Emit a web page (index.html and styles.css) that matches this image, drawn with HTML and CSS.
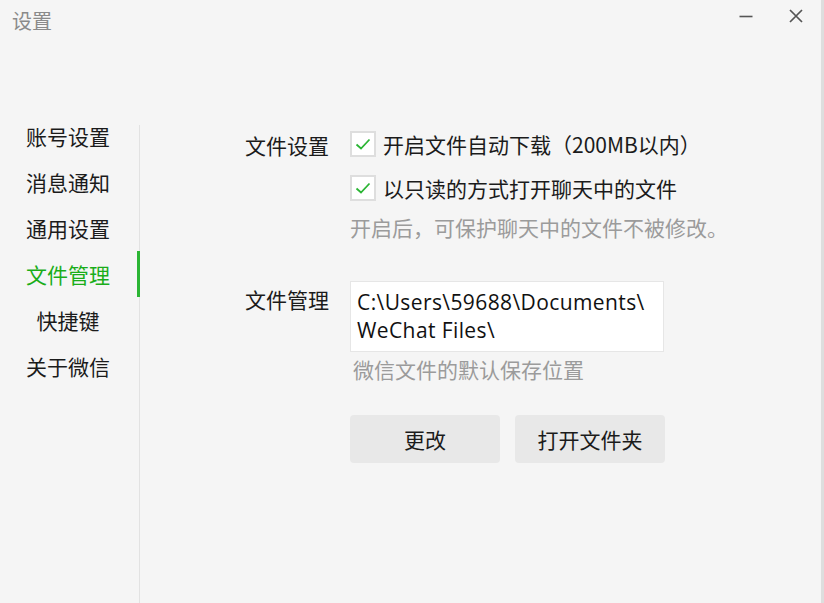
FILE: index.html
```html
<!DOCTYPE html>
<html lang="zh-CN">
<head>
<meta charset="utf-8">
<title>设置</title>
<link rel="stylesheet" href="styles.css">
</head>
<body>
<div class="window">
  <header class="titlebar">
    <span class="title">设置</span>
    <div class="controls">
      <span class="ctl">
        <svg width="14" height="14" viewBox="0 0 14 14"><path d="M0.5 7.5H13.5" stroke="#555" stroke-width="1.6"/></svg>
      </span>
      <span class="ctl">
        <svg width="14" height="14" viewBox="0 0 14 14"><path d="M1 1L13 13M13 1L1 13" stroke="#555" stroke-width="1.7"/></svg>
      </span>
    </div>
  </header>
  <div class="main">
    <nav class="sidebar">
      <div class="nav-item">账号设置</div>
      <div class="nav-item">消息通知</div>
      <div class="nav-item">通用设置</div>
      <div class="nav-item active">文件管理</div>
      <div class="nav-item">快捷键</div>
      <div class="nav-item">关于微信</div>
    </nav>
    <section class="content">
      <div class="row first">
        <div class="label">文件设置</div>
        <div class="field">
          <label class="check">
            <span class="box"><svg width="20" height="20" viewBox="0 0 20 20"><path d="M3.5 10.5L8 14.5L16.5 5.5" fill="none" stroke="#2bb534" stroke-width="1.8"/></svg></span>
            <span>开启文件自动下载（200MB以内）</span>
          </label>
          <label class="check second">
            <span class="box"><svg width="20" height="20" viewBox="0 0 20 20"><path d="M3.5 10.5L8 14.5L16.5 5.5" fill="none" stroke="#2bb534" stroke-width="1.8"/></svg></span>
            <span>以只读的方式打开聊天中的文件</span>
          </label>
          <div class="hint">开启后，可保护聊天中的文件不被修改。</div>
        </div>
      </div>
      <div class="row second-row">
        <div class="label label-path">文件管理</div>
        <div class="field">
          <div class="path">C:\Users\59688\Documents\<br>WeChat Files\</div>
          <div class="hint hint2">微信文件的默认保存位置</div>
          <div class="buttons">
            <button class="btn">更改</button>
            <button class="btn">打开文件夹</button>
          </div>
        </div>
      </div>
    </section>
  </div>
</div>
</body>
</html>
```

FILE: styles.css
```css
* { box-sizing: border-box; }
html, body {
  margin: 0;
  padding: 0;
  background: #f5f5f5;
}
body {
  font-family: "Noto Sans CJK SC", "Noto Sans", sans-serif;
  color: #1b1b1b;
}
.window {
  width: 824px;
  height: 603px;
  display: flex;
  flex-direction: column;
  background: #f5f5f5;
  border-right: 3px solid #dedede;
  overflow: hidden;
}
.titlebar {
  height: 44px;
  display: flex;
  justify-content: space-between;
  align-items: flex-start;
  padding: 6px 0 0 12px;
  flex: none;
}
.title {
  font-size: 20px;
  line-height: 30px;
  color: #8a8a8a;
}
.controls {
  display: flex;
  gap: 36px;
  padding: 3px 18px 0 0;
}
.ctl { display: block; width: 14px; height: 14px; }
.ctl svg { display: block; }
.main {
  flex: 1;
  display: flex;
}
.sidebar {
  width: 140px;
  flex: none;
  padding-top: 69px;
  position: relative;
}
.sidebar::after {
  content: "";
  position: absolute;
  right: 0;
  top: 81px;
  bottom: 0;
  width: 1px;
  background: #e2e2e2;
}
.nav-item {
  height: 46px;
  line-height: 46px;
  font-size: 21px;
  text-align: center;
  padding-right: 4px;
  position: relative;
}
.nav-item.active { color: #1aad19; }
.nav-item.active::after {
  content: "";
  position: absolute;
  right: 0;
  top: 0;
  width: 3px;
  height: 46px;
  background: #2bb534;
  z-index: 1;
}
.content {
  flex: 1;
  padding: 87px 0 0 105px;
  font-size: 21px;
}
.row {
  display: grid;
  grid-template-columns: 105px auto;
}
.label {
  line-height: 26px;
  margin-top: 1px;
}
.label-path { margin-top: 5px; }
.check {
  display: flex;
  align-items: center;
  gap: 7px;
  height: 26px;
  line-height: 26px;
}
.check.second { margin-top: 18px; }
.box {
  width: 26px;
  height: 26px;
  border: 2px solid #dedede;
  background: #fff;
  display: flex;
  align-items: center;
  justify-content: center;
}
.box svg { display: block; }
.hint {
  color: #9b9b9b;
  line-height: 26px;
  margin-top: 13px;
}
.second-row { margin-top: 41px; }
.path {
  width: 314px;
  height: 71px;
  background: #fff;
  border: 1px solid #e6e6e6;
  padding: 6px 6px 0;
  font-family: "Open Sans", "Noto Sans", sans-serif;
  font-size: 21px;
  letter-spacing: 0.4px;
  line-height: 28px;
  color: #111;
  white-space: nowrap;
}
.hint2 { margin-top: 4px; padding-left: 3px; }
.buttons {
  display: flex;
  gap: 15px;
  margin-top: 33px;
}
.btn {
  width: 150px;
  height: 48px;
  border: none;
  border-radius: 4px;
  background: #e8e8e8;
  font-family: "Noto Sans CJK SC", sans-serif;
  font-size: 21px;
  color: #1b1b1b;
  padding: 0;
}
```
